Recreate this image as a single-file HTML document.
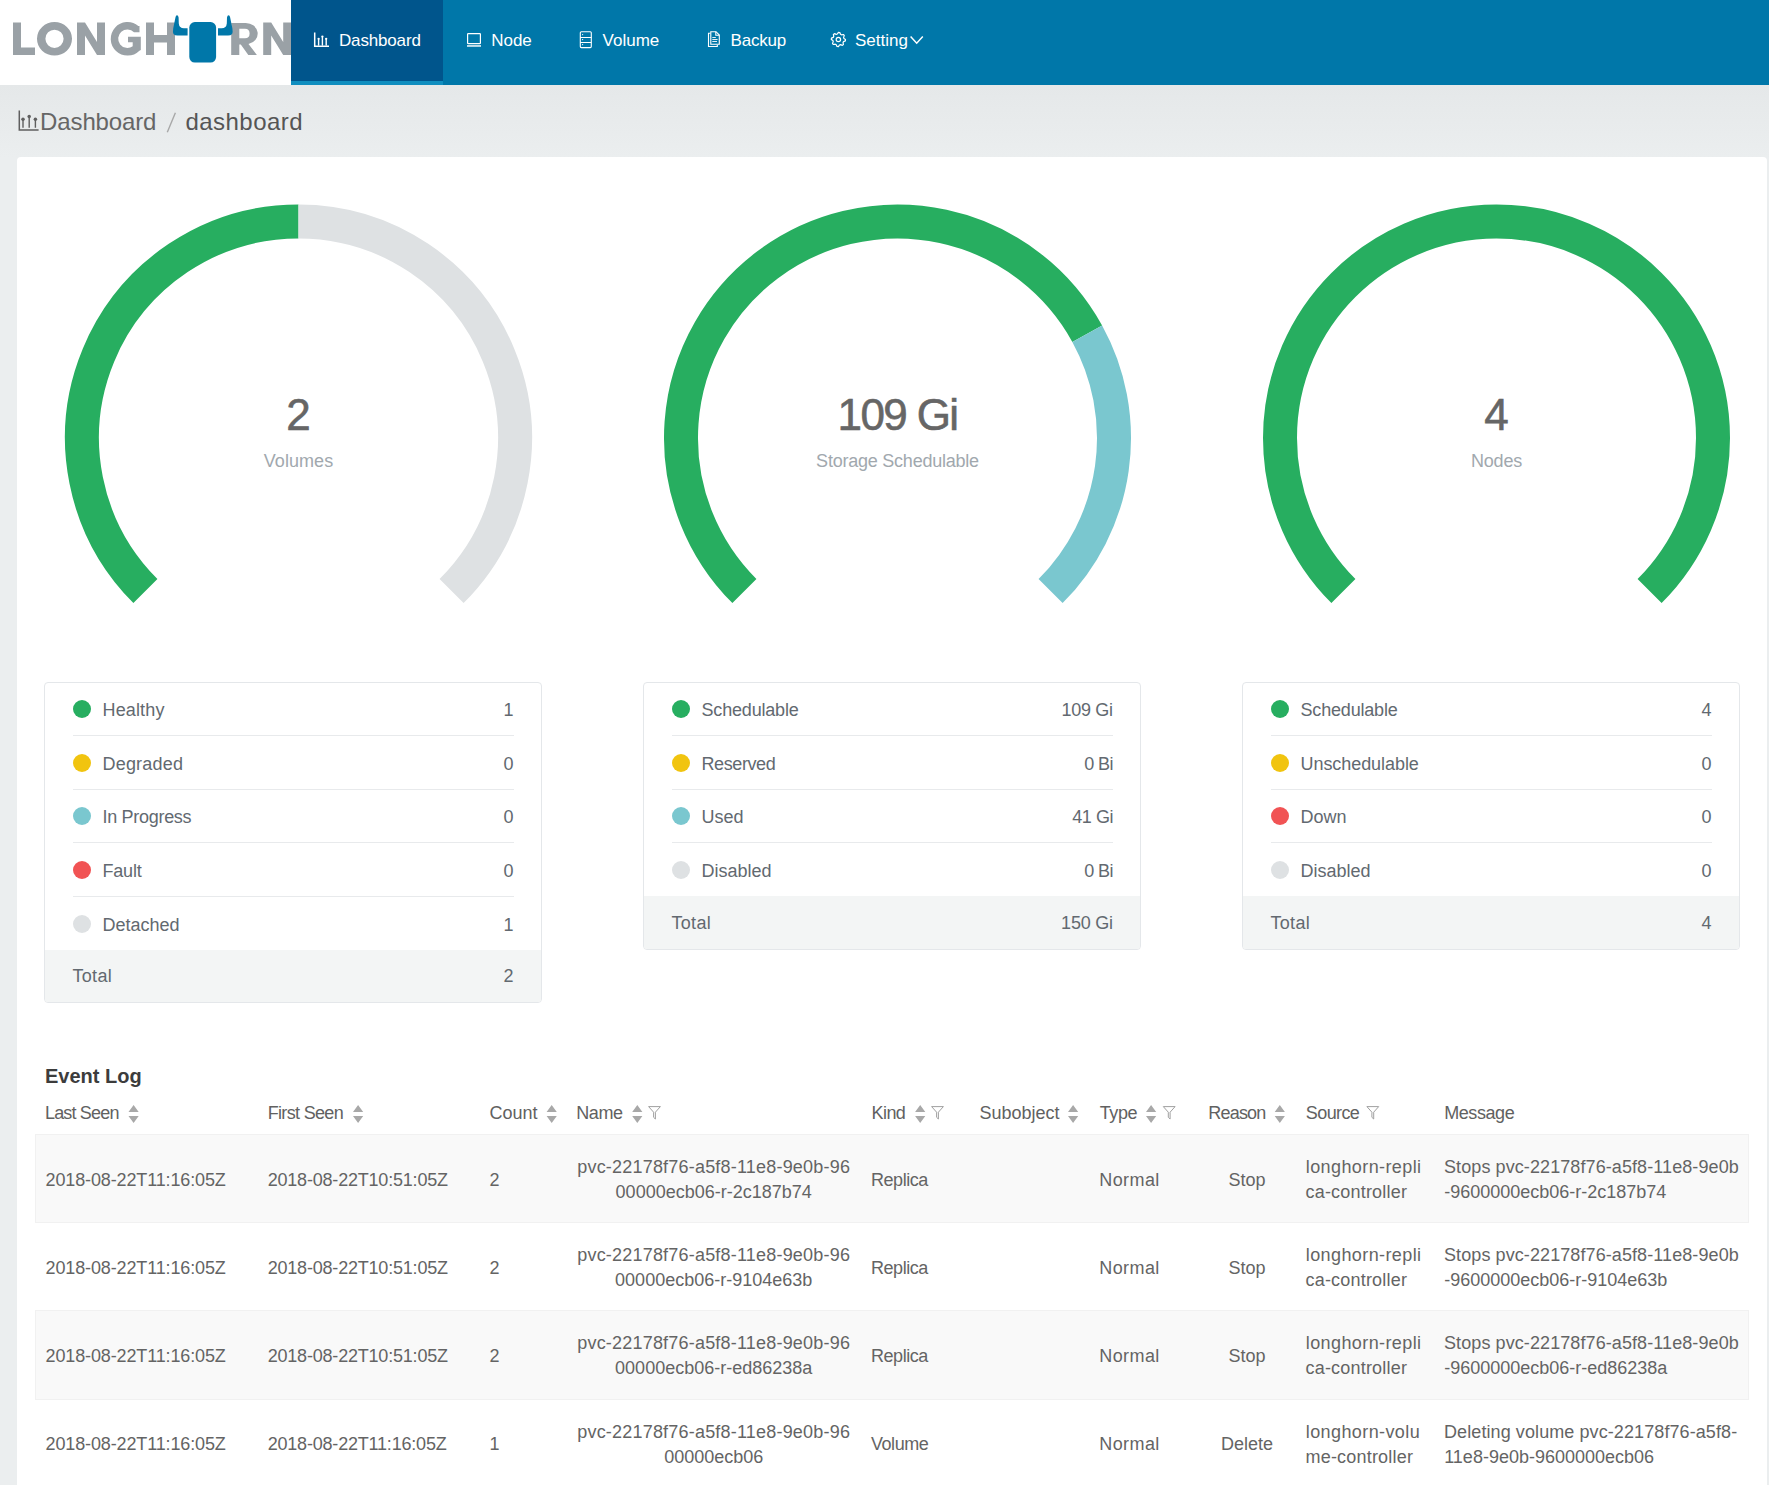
<!DOCTYPE html>
<html><head><meta charset="utf-8">
<style>
*{box-sizing:border-box;margin:0;padding:0}
html,body{width:1769px;height:1485px;overflow:hidden}
body{position:relative;background:#ebeeef;font-family:"Liberation Sans",sans-serif;color:#595959}
.a{position:absolute;white-space:nowrap}
.nav{position:absolute;font-size:17px;line-height:17px;color:#fff;white-space:nowrap}
.t18{position:absolute;font-size:18px;line-height:18px;white-space:nowrap}
.c{color:#5a6169}
.g{color:#595959}
</style></head><body>
<div class="a" style="left:0;top:0;width:1769px;height:85px;background:#0077a9"></div>
<div class="a" style="left:0;top:0;width:291px;height:85px;background:#fff"></div>
<div class="a" style="left:291px;top:0;width:152px;height:85px;background:#00558c;border-bottom:4px solid #108ebf"></div>
<div class="a" style="left:0;top:85px;width:1769px;height:72px;background:linear-gradient(#e5e8e9,#ebeeef)"></div>
<svg class="a" style="left:0;top:0" width="291" height="85" viewBox="0 0 291 85">
<g fill="#9aa1a6">
<path d="M13 22.5h8v25h14v7.5H13z"/>
<path fill-rule="evenodd" d="M54.5 22A17.5 16.8 0 1 1 54.5 55.6A17.5 16.8 0 1 1 54.5 22ZM54.5 29.7A9.1 9.1 0 1 0 54.5 47.9A9.1 9.1 0 1 0 54.5 29.7Z"/>
<path d="M77 22.5h8l12 19.5V22.5h8V55h-8L85 35.5V55h-8z"/>
<path d="M138.3 25.9L139.5 25.9V32.3L134 32.3A9.2 9.2 0 1 0 132.7 46.2V42.3H128V36.8H140.8V50L139.4 50.7A16.8 16.8 0 1 1 138.3 25.9Z"/>
<path d="M146 22.5h8v12.5h13V22.5h8V55h-8V42.5h-13V55h-8z"/>
<path fill-rule="evenodd" d="M231.2 22.9h14.5A12 10.7 0 0 1 248.5 44L256.9 54.9H248.3L240.8 44.4H239.3V54.9H231.2ZM239.3 28.8V38.2H245Q249.6 38.2 249.6 33.5Q249.6 28.8 245 28.8Z"/>
<path d="M263.2 22.5h8l12 19.5V22.5h8V55h-8L271.2 35.5V55h-8z"/>
</g>
<g fill="#0077a9">
<rect x="189.3" y="22.1" width="26.8" height="40.5" rx="5.5"/>
<path d="M187.6 28.2H184Q179.2 28.2 178.8 23.5L178.6 17.5Q178.2 15.2 177 15.2Q175.9 15.2 175.5 17.3L173.2 28.5Q172.6 32 173.5 34Q174.8 35.6 177.5 35.6H187.6Z"/>
<path d="M218 28.2H221.6Q226.4 28.2 226.8 23.5L227 17.5Q227.4 15.2 228.6 15.2Q229.7 15.2 230.1 17.3L232.4 28.5Q233 32 232.1 34Q230.8 35.6 228.1 35.6H218Z"/>
</g></svg>
<div class="a" style="left:339.0px;top:31.8px;font-size:17px;line-height:17px;color:#fff;font-weight:400;letter-spacing:-0.162px;">Dashboard</div>
<div class="a" style="left:491.2px;top:31.8px;font-size:17px;line-height:17px;color:#fff;font-weight:400;">Node</div>
<div class="a" style="left:602.6px;top:31.8px;font-size:17px;line-height:17px;color:#fff;font-weight:400;">Volume</div>
<div class="a" style="left:730.6px;top:31.8px;font-size:17px;line-height:17px;color:#fff;font-weight:400;letter-spacing:-0.201px;">Backup</div>
<div class="a" style="left:855.0px;top:31.8px;font-size:17px;line-height:17px;color:#fff;font-weight:400;">Setting</div>
<svg class="a" style="left:0;top:0" width="960" height="85" viewBox="0 0 960 85" fill="none" stroke="#fff">
<path d="M314.7 32.5V46.3H329" stroke-width="1.5"/>
<path d="M318.6 39V45M322.4 36.6V45M326.2 39V45" stroke-width="1.4" stroke-linecap="round"/>
<circle cx="318.6" cy="38.8" r="1.15" fill="#fff" stroke="none"/><circle cx="322.4" cy="36.6" r="1.15" fill="#fff" stroke="none"/><circle cx="326.2" cy="38.8" r="1.15" fill="#fff" stroke="none"/>
<rect x="467.6" y="33.6" width="12.8" height="10" rx="0.6" stroke-width="1.2"/>
<rect x="467" y="45.1" width="14" height="1.7" fill="#fff" fill-opacity="0.85" stroke="none"/>
<rect x="580.3" y="31.7" width="11" height="15.9" rx="1" stroke-width="1.1"/>
<path d="M580.3 37.5H591.3M580.3 42.5H591.3" stroke-width="1.1"/>
<circle cx="582.6" cy="34.6" r="0.65" fill="#fff" stroke="none"/><circle cx="582.6" cy="39.6" r="0.65" fill="#fff" stroke="none"/><circle cx="582.6" cy="44.6" r="0.65" fill="#fff" stroke="none"/>
<path d="M710.3 33.2H708.5V46.5H717.3V45" stroke-width="1.1"/>
<path d="M710.8 31.7H716L719.3 35V44.3H710.8Z" stroke-width="1.1"/>
<path d="M715.8 31.7V35.2H719.3" stroke-width="1.1"/>
<path d="M712.3 37.5H715.8M712.3 39.5H717.6M712.3 41.5H717" stroke-width="0.9"/>
<path d="M838.40 32.40 L839.79 32.54 L840.54 34.33 L841.51 34.84 L843.42 34.48 L844.30 35.56 L843.57 37.36 L843.89 38.41 L845.50 39.50 L845.36 40.89 L843.57 41.64 L843.06 42.61 L843.42 44.52 L842.34 45.40 L840.54 44.67 L839.49 44.99 L838.40 46.60 L837.01 46.46 L836.26 44.67 L835.29 44.16 L833.38 44.52 L832.50 43.44 L833.23 41.64 L832.91 40.59 L831.30 39.50 L831.44 38.11 L833.23 37.36 L833.74 36.39 L833.38 34.48 L834.46 33.60 L836.26 34.33 L837.31 34.01Z" stroke-width="1.2" stroke-linejoin="round"/>
<circle cx="838.4" cy="39.5" r="2.2" stroke-width="1.2"/>
<path d="M910.6 36.6L916.7 43.2L922.8 36.6" stroke-width="1.5"/>
</svg>
<svg class="a" style="left:0;top:95px" width="60" height="50" viewBox="0 95 60 50" fill="none" stroke="#5f5f5f">
<path d="M19.3 110.5V130.1H38.6" stroke-width="1.5"/>
<path d="M23 119.5V127.8M29.2 116.8V127.8M35.4 119.5V127.8" stroke-width="1.4"/>
<circle cx="23" cy="119.2" r="1.75" fill="#5f5f5f" stroke="none"/><circle cx="29.2" cy="116.6" r="1.75" fill="#5f5f5f" stroke="none"/><circle cx="35.4" cy="119.2" r="1.75" fill="#5f5f5f" stroke="none"/>
</svg>
<div class="a" style="left:40.1px;top:109.7px;font-size:24px;line-height:24px;color:#666;font-weight:400;letter-spacing:-0.132px;">Dashboard</div>
<svg class="a" style="left:160px;top:105px" width="24" height="32" viewBox="160 105 24 32"><path d="M167.3 132.2L175.4 112.7" stroke="#a8a8a8" stroke-width="1.4"/></svg>
<div class="a" style="left:185.5px;top:109.7px;font-size:24px;line-height:24px;color:#555;font-weight:400;letter-spacing:0.455px;">dashboard</div>
<div class="a" style="left:17px;top:157px;width:1750px;height:1400px;background:#fff;border-radius:4px"></div>
<svg class="a" style="left:0;top:150px" width="1769" height="500" viewBox="0 150 1769 500">
<path d="M145.41 591.09A216.5 216.5 0 0 1 298.50 221.50" stroke="#27ae60" stroke-width="34" fill="none"/>
<path d="M298.50 221.50A216.5 216.5 0 0 1 451.59 591.09" stroke="#dee1e3" stroke-width="34" fill="none"/>
<path d="M744.41 591.09A216.5 216.5 0 1 1 1087.22 333.70" stroke="#27ae60" stroke-width="34" fill="none"/>
<path d="M1087.22 333.70A216.5 216.5 0 0 1 1050.59 591.09" stroke="#7ac7cf" stroke-width="34" fill="none"/>
<path d="M1343.41 591.09A216.5 216.5 0 1 1 1649.59 591.09" stroke="#27ae60" stroke-width="34" fill="none"/>
</svg>
<div class="a" style="left:-1.5px;width:600px;top:392.6px;font-size:44px;line-height:44px;color:#666;font-weight:400;text-align:center;-webkit-text-stroke:0.6px #666;">2</div>
<div class="a" style="left:-1.5px;width:600px;top:451.6px;font-size:18px;line-height:18px;color:#a1a8ae;font-weight:400;text-align:center;letter-spacing:0.050px;">Volumes</div>
<div class="a" style="left:597.5px;width:600px;top:392.6px;font-size:44px;line-height:44px;color:#666;font-weight:400;text-align:center;-webkit-text-stroke:0.6px #666;letter-spacing:-1.638px;">109 Gi</div>
<div class="a" style="left:597.5px;width:600px;top:451.6px;font-size:18px;line-height:18px;color:#a1a8ae;font-weight:400;text-align:center;letter-spacing:-0.230px;">Storage Schedulable</div>
<div class="a" style="left:1196.5px;width:600px;top:392.6px;font-size:44px;line-height:44px;color:#666;font-weight:400;text-align:center;-webkit-text-stroke:0.6px #666;">4</div>
<div class="a" style="left:1196.5px;width:600px;top:451.6px;font-size:18px;line-height:18px;color:#a1a8ae;font-weight:400;text-align:center;letter-spacing:-0.229px;">Nodes</div>
<div class="a" style="left:44px;top:682px;width:498px;height:321.0px;border:1px solid #e4e7ea;border-radius:4px;background:#fff;overflow:hidden"><div style="position:absolute;left:0;right:0;bottom:0;height:52.0px;background:#f3f5f5"></div></div>
<div class="a" style="left:73px;top:700.0px;width:18px;height:18px;border-radius:50%;background:#27ae60"></div>
<div class="a" style="left:102.5px;top:701.0px;font-size:18px;line-height:18px;color:#626970;font-weight:400;letter-spacing:0.15px;">Healthy</div>
<div class="a" style="right:1255.5px;top:701.0px;font-size:18px;line-height:18px;color:#626970;font-weight:400;text-align:right;letter-spacing:0px;">1</div>
<div class="a" style="left:73px;top:735.0px;width:441px;height:1px;background:#e8eaec"></div>
<div class="a" style="left:73px;top:753.5px;width:18px;height:18px;border-radius:50%;background:#f1c40f"></div>
<div class="a" style="left:102.5px;top:754.5px;font-size:18px;line-height:18px;color:#626970;font-weight:400;letter-spacing:0.2px;">Degraded</div>
<div class="a" style="right:1255.5px;top:754.5px;font-size:18px;line-height:18px;color:#626970;font-weight:400;text-align:right;letter-spacing:0px;">0</div>
<div class="a" style="left:73px;top:789.0px;width:441px;height:1px;background:#e8eaec"></div>
<div class="a" style="left:73px;top:807.0px;width:18px;height:18px;border-radius:50%;background:#7ac7cf"></div>
<div class="a" style="left:102.5px;top:808.0px;font-size:18px;line-height:18px;color:#626970;font-weight:400;letter-spacing:-0.3px;">In Progress</div>
<div class="a" style="right:1255.5px;top:808.0px;font-size:18px;line-height:18px;color:#626970;font-weight:400;text-align:right;letter-spacing:0px;">0</div>
<div class="a" style="left:73px;top:842.0px;width:441px;height:1px;background:#e8eaec"></div>
<div class="a" style="left:73px;top:860.5px;width:18px;height:18px;border-radius:50%;background:#f15354"></div>
<div class="a" style="left:102.5px;top:861.5px;font-size:18px;line-height:18px;color:#626970;font-weight:400;letter-spacing:-0.2px;">Fault</div>
<div class="a" style="right:1255.5px;top:861.5px;font-size:18px;line-height:18px;color:#626970;font-weight:400;text-align:right;letter-spacing:0px;">0</div>
<div class="a" style="left:73px;top:896.0px;width:441px;height:1px;background:#e8eaec"></div>
<div class="a" style="left:73px;top:914.5px;width:18px;height:18px;border-radius:50%;background:#dee1e3"></div>
<div class="a" style="left:102.5px;top:915.5px;font-size:18px;line-height:18px;color:#626970;font-weight:400;letter-spacing:0px;">Detached</div>
<div class="a" style="right:1255.5px;top:915.5px;font-size:18px;line-height:18px;color:#626970;font-weight:400;text-align:right;letter-spacing:0px;">1</div>
<div class="a" style="left:72.5px;top:967.2px;font-size:18px;line-height:18px;color:#626970;font-weight:400;letter-spacing:0.3px;">Total</div>
<div class="a" style="right:1255.5px;top:967.2px;font-size:18px;line-height:18px;color:#626970;font-weight:400;text-align:right;letter-spacing:0px;">2</div>
<div class="a" style="left:643px;top:682px;width:498px;height:268.0px;border:1px solid #e4e7ea;border-radius:4px;background:#fff;overflow:hidden"><div style="position:absolute;left:0;right:0;bottom:0;height:53.0px;background:#f3f5f5"></div></div>
<div class="a" style="left:672px;top:700.0px;width:18px;height:18px;border-radius:50%;background:#27ae60"></div>
<div class="a" style="left:701.5px;top:701.0px;font-size:18px;line-height:18px;color:#626970;font-weight:400;letter-spacing:-0.18px;">Schedulable</div>
<div class="a" style="right:656.2px;top:701.0px;font-size:18px;line-height:18px;color:#626970;font-weight:400;text-align:right;letter-spacing:-0.28px;">109 Gi</div>
<div class="a" style="left:672px;top:735.0px;width:441px;height:1px;background:#e8eaec"></div>
<div class="a" style="left:672px;top:753.5px;width:18px;height:18px;border-radius:50%;background:#f1c40f"></div>
<div class="a" style="left:701.5px;top:754.5px;font-size:18px;line-height:18px;color:#626970;font-weight:400;letter-spacing:-0.4px;">Reserved</div>
<div class="a" style="right:656.0px;top:754.5px;font-size:18px;line-height:18px;color:#626970;font-weight:400;text-align:right;letter-spacing:-0.55px;">0 Bi</div>
<div class="a" style="left:672px;top:789.0px;width:441px;height:1px;background:#e8eaec"></div>
<div class="a" style="left:672px;top:807.0px;width:18px;height:18px;border-radius:50%;background:#7ac7cf"></div>
<div class="a" style="left:701.5px;top:808.0px;font-size:18px;line-height:18px;color:#626970;font-weight:400;letter-spacing:0px;">Used</div>
<div class="a" style="right:656.0px;top:808.0px;font-size:18px;line-height:18px;color:#626970;font-weight:400;text-align:right;letter-spacing:-0.45px;">41 Gi</div>
<div class="a" style="left:672px;top:842.0px;width:441px;height:1px;background:#e8eaec"></div>
<div class="a" style="left:672px;top:860.5px;width:18px;height:18px;border-radius:50%;background:#dee1e3"></div>
<div class="a" style="left:701.5px;top:861.5px;font-size:18px;line-height:18px;color:#626970;font-weight:400;letter-spacing:0px;">Disabled</div>
<div class="a" style="right:656.0px;top:861.5px;font-size:18px;line-height:18px;color:#626970;font-weight:400;text-align:right;letter-spacing:-0.55px;">0 Bi</div>
<div class="a" style="left:671.5px;top:913.7px;font-size:18px;line-height:18px;color:#626970;font-weight:400;letter-spacing:0.3px;">Total</div>
<div class="a" style="right:656.3px;top:913.7px;font-size:18px;line-height:18px;color:#626970;font-weight:400;text-align:right;letter-spacing:-0.24px;">150 Gi</div>
<div class="a" style="left:1242px;top:682px;width:498px;height:268.0px;border:1px solid #e4e7ea;border-radius:4px;background:#fff;overflow:hidden"><div style="position:absolute;left:0;right:0;bottom:0;height:53.0px;background:#f3f5f5"></div></div>
<div class="a" style="left:1271px;top:700.0px;width:18px;height:18px;border-radius:50%;background:#27ae60"></div>
<div class="a" style="left:1300.5px;top:701.0px;font-size:18px;line-height:18px;color:#626970;font-weight:400;letter-spacing:-0.18px;">Schedulable</div>
<div class="a" style="right:57.5px;top:701.0px;font-size:18px;line-height:18px;color:#626970;font-weight:400;text-align:right;letter-spacing:0px;">4</div>
<div class="a" style="left:1271px;top:735.0px;width:441px;height:1px;background:#e8eaec"></div>
<div class="a" style="left:1271px;top:753.5px;width:18px;height:18px;border-radius:50%;background:#f1c40f"></div>
<div class="a" style="left:1300.5px;top:754.5px;font-size:18px;line-height:18px;color:#626970;font-weight:400;letter-spacing:-0.06px;">Unschedulable</div>
<div class="a" style="right:57.5px;top:754.5px;font-size:18px;line-height:18px;color:#626970;font-weight:400;text-align:right;letter-spacing:0px;">0</div>
<div class="a" style="left:1271px;top:789.0px;width:441px;height:1px;background:#e8eaec"></div>
<div class="a" style="left:1271px;top:807.0px;width:18px;height:18px;border-radius:50%;background:#f15354"></div>
<div class="a" style="left:1300.5px;top:808.0px;font-size:18px;line-height:18px;color:#626970;font-weight:400;letter-spacing:0px;">Down</div>
<div class="a" style="right:57.5px;top:808.0px;font-size:18px;line-height:18px;color:#626970;font-weight:400;text-align:right;letter-spacing:0px;">0</div>
<div class="a" style="left:1271px;top:842.0px;width:441px;height:1px;background:#e8eaec"></div>
<div class="a" style="left:1271px;top:860.5px;width:18px;height:18px;border-radius:50%;background:#dee1e3"></div>
<div class="a" style="left:1300.5px;top:861.5px;font-size:18px;line-height:18px;color:#626970;font-weight:400;letter-spacing:0px;">Disabled</div>
<div class="a" style="right:57.5px;top:861.5px;font-size:18px;line-height:18px;color:#626970;font-weight:400;text-align:right;letter-spacing:0px;">0</div>
<div class="a" style="left:1270.5px;top:913.7px;font-size:18px;line-height:18px;color:#626970;font-weight:400;letter-spacing:0.3px;">Total</div>
<div class="a" style="right:57.5px;top:913.7px;font-size:18px;line-height:18px;color:#626970;font-weight:400;text-align:right;letter-spacing:0px;">4</div>
<div class="a" style="left:45.0px;top:1066.3px;font-size:20px;line-height:20px;color:#3c3c3c;font-weight:700;">Event Log</div>
<div class="a" style="left:45.0px;top:1104.1px;font-size:18px;line-height:18px;color:#616161;font-weight:400;letter-spacing:-0.831px;">Last Seen</div>
<div class="a" style="left:267.7px;top:1104.1px;font-size:18px;line-height:18px;color:#616161;font-weight:400;letter-spacing:-0.665px;">First Seen</div>
<div class="a" style="left:489.6px;top:1104.1px;font-size:18px;line-height:18px;color:#616161;font-weight:400;letter-spacing:-0.029px;">Count</div>
<div class="a" style="left:576.2px;top:1104.1px;font-size:18px;line-height:18px;color:#616161;font-weight:400;letter-spacing:-0.383px;">Name</div>
<div class="a" style="left:871.6px;top:1104.1px;font-size:18px;line-height:18px;color:#616161;font-weight:400;letter-spacing:-0.608px;">Kind</div>
<div class="a" style="left:979.4px;top:1104.1px;font-size:18px;line-height:18px;color:#616161;font-weight:400;letter-spacing:0.002px;">Subobject</div>
<div class="a" style="left:1099.8px;top:1104.1px;font-size:18px;line-height:18px;color:#616161;font-weight:400;letter-spacing:-0.433px;">Type</div>
<div class="a" style="left:1208.3px;top:1104.1px;font-size:18px;line-height:18px;color:#616161;font-weight:400;letter-spacing:-0.810px;">Reason</div>
<div class="a" style="left:1305.8px;top:1104.1px;font-size:18px;line-height:18px;color:#616161;font-weight:400;letter-spacing:-0.591px;">Source</div>
<div class="a" style="left:1444.2px;top:1104.1px;font-size:18px;line-height:18px;color:#616161;font-weight:400;letter-spacing:-0.423px;">Message</div>
<svg class="a" style="left:0;top:1095px" width="1769" height="35" viewBox="0 1095 1769 35">
<path d="M128.5 1112L133.6 1105L138.7 1112ZM128.5 1116L133.6 1123L138.7 1116Z" fill="#a8a8a8"/>
<path d="M353.0 1112L358.1 1105L363.2 1112ZM353.0 1116L358.1 1123L363.2 1116Z" fill="#a8a8a8"/>
<path d="M546.6 1112L551.7 1105L556.8 1112ZM546.6 1116L551.7 1123L556.8 1116Z" fill="#a8a8a8"/>
<path d="M632.2 1112L637.3 1105L642.4 1112ZM632.2 1116L637.3 1123L642.4 1116Z" fill="#a8a8a8"/>
<path d="M648.6 1106.6H660.4L655.4 1112.2V1119L653.6 1117.3V1112.2Z" fill="none" stroke="#a0a0a0" stroke-width="1" stroke-linejoin="round"/>
<path d="M915.1 1112L920.2 1105L925.3 1112ZM915.1 1116L920.2 1123L925.3 1116Z" fill="#a8a8a8"/>
<path d="M931.6 1106.6H943.4L938.4 1112.2V1119L936.6 1117.3V1112.2Z" fill="none" stroke="#a0a0a0" stroke-width="1" stroke-linejoin="round"/>
<path d="M1068.0 1112L1073.1 1105L1078.2 1112ZM1068.0 1116L1073.1 1123L1078.2 1116Z" fill="#a8a8a8"/>
<path d="M1146.0 1112L1151.1 1105L1156.2 1112ZM1146.0 1116L1151.1 1123L1156.2 1116Z" fill="#a8a8a8"/>
<path d="M1163.3 1106.6H1175.1L1170.1 1112.2V1119L1168.3 1117.3V1112.2Z" fill="none" stroke="#a0a0a0" stroke-width="1" stroke-linejoin="round"/>
<path d="M1274.7 1112L1279.8 1105L1284.9 1112ZM1274.7 1116L1279.8 1123L1284.9 1116Z" fill="#a8a8a8"/>
<path d="M1366.9 1106.6H1378.7L1373.7 1112.2V1119L1371.9 1117.3V1112.2Z" fill="none" stroke="#a0a0a0" stroke-width="1" stroke-linejoin="round"/>
</svg>
<div class="a" style="left:35px;top:1134px;width:1714px;height:89px;background:#f9f9f9;border:1px solid #f1f1f1"></div>
<div class="a" style="left:45.5px;top:1171.0px;font-size:18px;line-height:18px;color:#646464;font-weight:400;letter-spacing:-0.13px;">2018-08-22T11:16:05Z</div>
<div class="a" style="left:267.7px;top:1171.0px;font-size:18px;line-height:18px;color:#646464;font-weight:400;letter-spacing:-0.2px;">2018-08-22T10:51:05Z</div>
<div class="a" style="left:489.6px;top:1171.0px;font-size:18px;line-height:18px;color:#646464;font-weight:400;">2</div>
<div class="a" style="left:413.7px;width:600px;top:1157.7px;font-size:18px;line-height:18px;color:#646464;font-weight:400;text-align:center;letter-spacing:0.2px;">pvc-22178f76-a5f8-11e8-9e0b-96</div>
<div class="a" style="left:413.7px;width:600px;top:1182.5px;font-size:18px;line-height:18px;color:#646464;font-weight:400;text-align:center;">00000ecb06-r-2c187b74</div>
<div class="a" style="left:871.0px;top:1171.0px;font-size:18px;line-height:18px;color:#646464;font-weight:400;letter-spacing:-0.45px;">Replica</div>
<div class="a" style="left:1099.3px;top:1171.0px;font-size:18px;line-height:18px;color:#646464;font-weight:400;letter-spacing:0.4px;">Normal</div>
<div class="a" style="left:947.0px;width:600px;top:1171.0px;font-size:18px;line-height:18px;color:#646464;font-weight:400;text-align:center;">Stop</div>
<div class="a" style="left:1305.8px;top:1157.7px;font-size:18px;line-height:18px;color:#646464;font-weight:400;letter-spacing:0.4px;">longhorn-repli</div>
<div class="a" style="left:1305.5px;top:1182.5px;font-size:18px;line-height:18px;color:#646464;font-weight:400;letter-spacing:0.2px;">ca-controller</div>
<div class="a" style="left:1444.0px;top:1157.7px;font-size:18px;line-height:18px;color:#646464;font-weight:400;letter-spacing:0.09px;">Stops pvc-22178f76-a5f8-11e8-9e0b</div>
<div class="a" style="left:1444.2px;top:1182.5px;font-size:18px;line-height:18px;color:#646464;font-weight:400;">-9600000ecb06-r-2c187b74</div>
<div class="a" style="left:45.5px;top:1259.0px;font-size:18px;line-height:18px;color:#646464;font-weight:400;letter-spacing:-0.13px;">2018-08-22T11:16:05Z</div>
<div class="a" style="left:267.7px;top:1259.0px;font-size:18px;line-height:18px;color:#646464;font-weight:400;letter-spacing:-0.2px;">2018-08-22T10:51:05Z</div>
<div class="a" style="left:489.6px;top:1259.0px;font-size:18px;line-height:18px;color:#646464;font-weight:400;">2</div>
<div class="a" style="left:413.7px;width:600px;top:1246.0px;font-size:18px;line-height:18px;color:#646464;font-weight:400;text-align:center;letter-spacing:0.2px;">pvc-22178f76-a5f8-11e8-9e0b-96</div>
<div class="a" style="left:413.7px;width:600px;top:1270.8px;font-size:18px;line-height:18px;color:#646464;font-weight:400;text-align:center;">00000ecb06-r-9104e63b</div>
<div class="a" style="left:871.0px;top:1259.0px;font-size:18px;line-height:18px;color:#646464;font-weight:400;letter-spacing:-0.45px;">Replica</div>
<div class="a" style="left:1099.3px;top:1259.0px;font-size:18px;line-height:18px;color:#646464;font-weight:400;letter-spacing:0.4px;">Normal</div>
<div class="a" style="left:947.0px;width:600px;top:1259.0px;font-size:18px;line-height:18px;color:#646464;font-weight:400;text-align:center;">Stop</div>
<div class="a" style="left:1305.8px;top:1246.0px;font-size:18px;line-height:18px;color:#646464;font-weight:400;letter-spacing:0.4px;">longhorn-repli</div>
<div class="a" style="left:1305.5px;top:1270.8px;font-size:18px;line-height:18px;color:#646464;font-weight:400;letter-spacing:0.2px;">ca-controller</div>
<div class="a" style="left:1444.0px;top:1246.0px;font-size:18px;line-height:18px;color:#646464;font-weight:400;letter-spacing:0.09px;">Stops pvc-22178f76-a5f8-11e8-9e0b</div>
<div class="a" style="left:1444.2px;top:1270.8px;font-size:18px;line-height:18px;color:#646464;font-weight:400;">-9600000ecb06-r-9104e63b</div>
<div class="a" style="left:35px;top:1310px;width:1714px;height:90px;background:#f9f9f9;border:1px solid #f1f1f1"></div>
<div class="a" style="left:45.5px;top:1347.0px;font-size:18px;line-height:18px;color:#646464;font-weight:400;letter-spacing:-0.13px;">2018-08-22T11:16:05Z</div>
<div class="a" style="left:267.7px;top:1347.0px;font-size:18px;line-height:18px;color:#646464;font-weight:400;letter-spacing:-0.2px;">2018-08-22T10:51:05Z</div>
<div class="a" style="left:489.6px;top:1347.0px;font-size:18px;line-height:18px;color:#646464;font-weight:400;">2</div>
<div class="a" style="left:413.7px;width:600px;top:1334.4px;font-size:18px;line-height:18px;color:#646464;font-weight:400;text-align:center;letter-spacing:0.2px;">pvc-22178f76-a5f8-11e8-9e0b-96</div>
<div class="a" style="left:413.7px;width:600px;top:1359.2px;font-size:18px;line-height:18px;color:#646464;font-weight:400;text-align:center;">00000ecb06-r-ed86238a</div>
<div class="a" style="left:871.0px;top:1347.0px;font-size:18px;line-height:18px;color:#646464;font-weight:400;letter-spacing:-0.45px;">Replica</div>
<div class="a" style="left:1099.3px;top:1347.0px;font-size:18px;line-height:18px;color:#646464;font-weight:400;letter-spacing:0.4px;">Normal</div>
<div class="a" style="left:947.0px;width:600px;top:1347.0px;font-size:18px;line-height:18px;color:#646464;font-weight:400;text-align:center;">Stop</div>
<div class="a" style="left:1305.8px;top:1334.4px;font-size:18px;line-height:18px;color:#646464;font-weight:400;letter-spacing:0.4px;">longhorn-repli</div>
<div class="a" style="left:1305.5px;top:1359.2px;font-size:18px;line-height:18px;color:#646464;font-weight:400;letter-spacing:0.2px;">ca-controller</div>
<div class="a" style="left:1444.0px;top:1334.4px;font-size:18px;line-height:18px;color:#646464;font-weight:400;letter-spacing:0.09px;">Stops pvc-22178f76-a5f8-11e8-9e0b</div>
<div class="a" style="left:1444.2px;top:1359.2px;font-size:18px;line-height:18px;color:#646464;font-weight:400;">-9600000ecb06-r-ed86238a</div>
<div class="a" style="left:45.5px;top:1435.0px;font-size:18px;line-height:18px;color:#646464;font-weight:400;letter-spacing:-0.13px;">2018-08-22T11:16:05Z</div>
<div class="a" style="left:267.7px;top:1435.0px;font-size:18px;line-height:18px;color:#646464;font-weight:400;letter-spacing:-0.2px;">2018-08-22T11:16:05Z</div>
<div class="a" style="left:489.6px;top:1435.0px;font-size:18px;line-height:18px;color:#646464;font-weight:400;">1</div>
<div class="a" style="left:413.7px;width:600px;top:1422.7px;font-size:18px;line-height:18px;color:#646464;font-weight:400;text-align:center;letter-spacing:0.2px;">pvc-22178f76-a5f8-11e8-9e0b-96</div>
<div class="a" style="left:413.7px;width:600px;top:1447.5px;font-size:18px;line-height:18px;color:#646464;font-weight:400;text-align:center;">00000ecb06</div>
<div class="a" style="left:871.0px;top:1435.0px;font-size:18px;line-height:18px;color:#646464;font-weight:400;letter-spacing:-0.45px;">Volume</div>
<div class="a" style="left:1099.3px;top:1435.0px;font-size:18px;line-height:18px;color:#646464;font-weight:400;letter-spacing:0.4px;">Normal</div>
<div class="a" style="left:947.0px;width:600px;top:1435.0px;font-size:18px;line-height:18px;color:#646464;font-weight:400;text-align:center;">Delete</div>
<div class="a" style="left:1305.8px;top:1422.7px;font-size:18px;line-height:18px;color:#646464;font-weight:400;letter-spacing:0.4px;">longhorn-volu</div>
<div class="a" style="left:1305.5px;top:1447.5px;font-size:18px;line-height:18px;color:#646464;font-weight:400;letter-spacing:0.2px;">me-controller</div>
<div class="a" style="left:1444.0px;top:1422.7px;font-size:18px;line-height:18px;color:#646464;font-weight:400;letter-spacing:0.09px;">Deleting volume pvc-22178f76-a5f8-</div>
<div class="a" style="left:1444.2px;top:1447.5px;font-size:18px;line-height:18px;color:#646464;font-weight:400;">11e8-9e0b-9600000ecb06</div>
</body></html>
